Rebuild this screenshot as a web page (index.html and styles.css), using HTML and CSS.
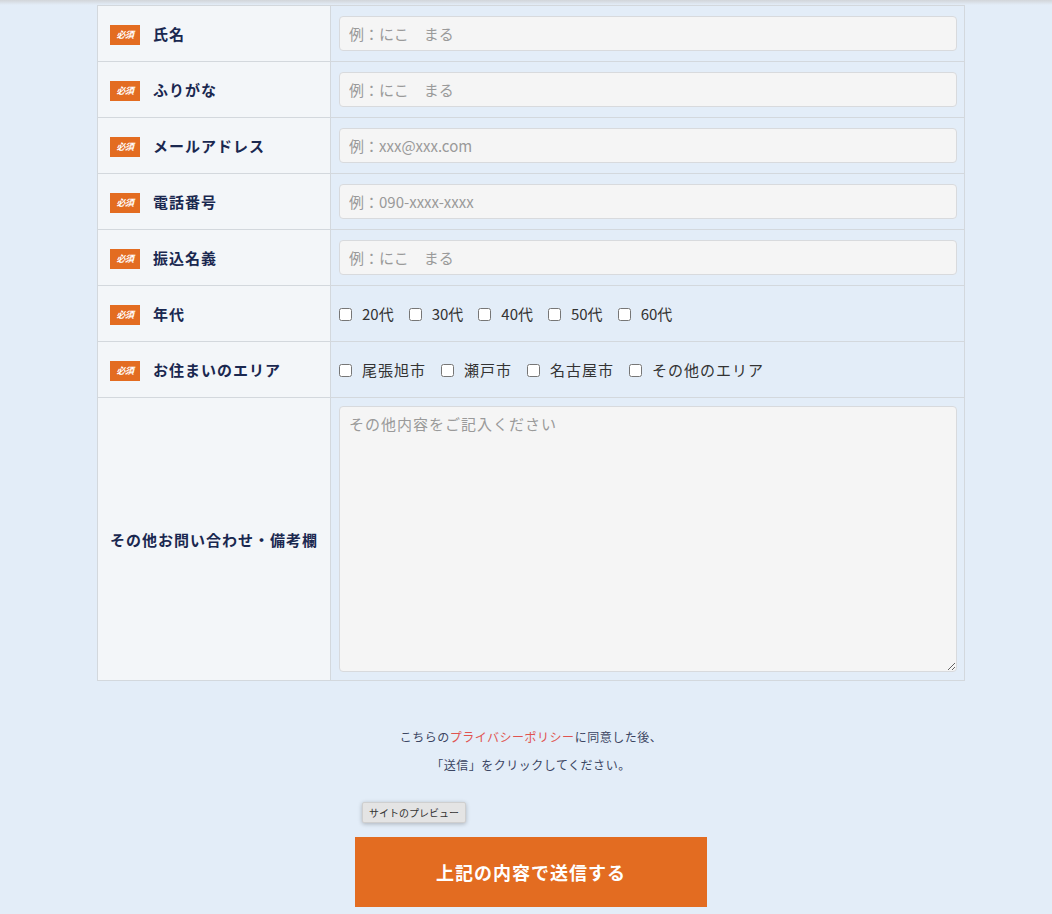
FILE: index.html
```html
<!DOCTYPE html>
<html lang="ja">
<head>
<meta charset="utf-8">
<title>お問い合わせ</title>
<link rel="stylesheet" href="styles.css">
</head>
<body>
<div class="topshade"></div>
<div class="page">
  <div class="form">
    <div class="label"><span class="badge">必須</span><span class="ltext">氏名</span></div>
    <div class="field"><input class="inp" type="text" placeholder="例：にこ　まる"></div>

    <div class="label"><span class="badge">必須</span><span class="ltext">ふりがな</span></div>
    <div class="field"><input class="inp" type="text" placeholder="例：にこ　まる"></div>

    <div class="label"><span class="badge">必須</span><span class="ltext">メールアドレス</span></div>
    <div class="field"><input class="inp" type="text" placeholder="例：xxx@xxx.com"></div>

    <div class="label"><span class="badge">必須</span><span class="ltext">電話番号</span></div>
    <div class="field"><input class="inp" type="text" placeholder="例：090-xxxx-xxxx"></div>

    <div class="label"><span class="badge">必須</span><span class="ltext">振込名義</span></div>
    <div class="field"><input class="inp" type="text" placeholder="例：にこ　まる"></div>

    <div class="label"><span class="badge">必須</span><span class="ltext">年代</span></div>
    <div class="field checks">
      <label class="chk chk-age"><input type="checkbox"><span>20代</span></label>
      <label class="chk chk-age"><input type="checkbox"><span>30代</span></label>
      <label class="chk chk-age"><input type="checkbox"><span>40代</span></label>
      <label class="chk chk-age"><input type="checkbox"><span>50代</span></label>
      <label class="chk chk-age"><input type="checkbox"><span>60代</span></label>
    </div>

    <div class="label"><span class="badge">必須</span><span class="ltext">お住まいのエリア</span></div>
    <div class="field checks">
      <label class="chk"><input type="checkbox"><span>尾張旭市</span></label>
      <label class="chk"><input type="checkbox"><span>瀬戸市</span></label>
      <label class="chk"><input type="checkbox"><span>名古屋市</span></label>
      <label class="chk"><input type="checkbox"><span>その他のエリア</span></label>
    </div>

    <div class="label label-center"><span class="ltext">その他お問い合わせ・備考欄</span></div>
    <div class="field field-area"><textarea class="area" placeholder="その他内容をご記入ください"></textarea></div>
  </div>

  <div class="notice">
    <p>こちらの<a class="policy" href="#">プライバシーポリシー</a>に同意した後、</p>
    <p>「送信」をクリックしてください。</p>
  </div>

  <div class="actions">
    <button class="preview" type="button">サイトのプレビュー</button>
    <button class="submit" type="submit">上記の内容で送信する</button>
  </div>
</div>
</body>
</html>
```

FILE: styles.css
```css
html, body {
  margin: 0;
  padding: 0;
}
body {
  background: #e3edf8;
  font-family: "Noto Sans CJK JP", "Noto Sans", sans-serif;
  color: #1c2a4f;
}
.topshade {
  height: 5px;
  background: linear-gradient(#d2d5d9, #e3edf8);
}
.page {
  padding-left: 10px;
}
.form {
  width: 867px;
  margin: 0 auto;
  display: grid;
  grid-template-columns: 233px 634px;
  grid-template-rows: repeat(7, 56px) 283px;
  border-left: 1px solid #d3d8dd;
  border-top: 1px solid #d3d8dd;
}
.form > div {
  border-right: 1px solid #d3d8dd;
  border-bottom: 1px solid #d3d8dd;
}
.label {
  background: #f3f6f9;
  display: flex;
  align-items: center;
  padding-left: 12px;
}
.label-center {
  justify-content: center;
  padding-left: 0;
}
.badge {
  flex: none;
  width: 30px;
  height: 20px;
  background: #e36c21;
  color: #fff;
  font-size: 9px;
  font-weight: 700;
  font-style: italic;
  display: flex;
  align-items: center;
  justify-content: center;
  margin-right: 13px;
  margin-top: 2px;
  letter-spacing: -0.5px;
}
.ltext {
  font-size: 15px;
  font-weight: 700;
  letter-spacing: 1px;
  color: #1a2850;
}
.field {
  display: flex;
  align-items: center;
  padding: 0 7px 0 8px;
}
.inp {
  width: 100%;
  height: 35px;
  box-sizing: border-box;
  border: 1px solid #d8dadd;
  border-radius: 4px;
  background: #f5f5f5;
  padding: 0 9px;
  font-family: "Noto Sans CJK JP", sans-serif;
  font-size: 15px;
  color: #333;
}
.inp::placeholder,
.area::placeholder {
  color: #9a9a9a;
}
.chk {
  display: flex;
  align-items: center;
  font-size: 15px;
  letter-spacing: 1px;
  color: #333;
  margin-right: 15px;
}
.chk-age {
  letter-spacing: 0;
  margin-right: 15px;
}
.chk input {
  width: 13px;
  height: 13px;
  margin: 2px 10px 0 0;
}
.form .field-area {
  align-items: stretch;
  padding-top: 8px;
  padding-bottom: 8px;
}
.area {
  width: 100%;
  box-sizing: border-box;
  border: 1px solid #d8dadd;
  border-radius: 4px;
  background: #f5f5f5;
  padding: 6px 9px;
  font-family: "Noto Sans CJK JP", sans-serif;
  font-size: 15px;
  color: #333;
  letter-spacing: 1px;
  resize: vertical;
}
.notice {
  width: 868px;
  margin: 0 auto;
  padding-top: 42px;
  text-align: center;
}
.notice p {
  margin: 0;
  font-size: 12px;
  line-height: 28px;
  letter-spacing: 0.5px;
  color: #3b4562;
}
.policy {
  color: #e0534f;
  text-decoration: none;
}
.actions {
  width: 352px;
  margin: 0 auto;
  padding-top: 23px;
  display: flex;
  flex-direction: column;
  align-items: flex-start;
}
.preview {
  margin-left: 7px;
  height: 21px;
  padding: 0 6px;
  background: #e4e4e4;
  border: 1px solid #cfcfcf;
  border-radius: 2px;
  box-shadow: 0 1px 4px rgba(0,0,0,0.25);
  font-family: "Noto Sans CJK JP", sans-serif;
  font-size: 10px;
  color: #333;
  line-height: 19px;
}
.submit {
  margin-top: 14px;
  width: 352px;
  height: 70px;
  background: #e36c21;
  border: none;
  color: #fff;
  font-family: "Noto Sans CJK JP", sans-serif;
  font-size: 18px;
  font-weight: 700;
  letter-spacing: 1px;
}
```
